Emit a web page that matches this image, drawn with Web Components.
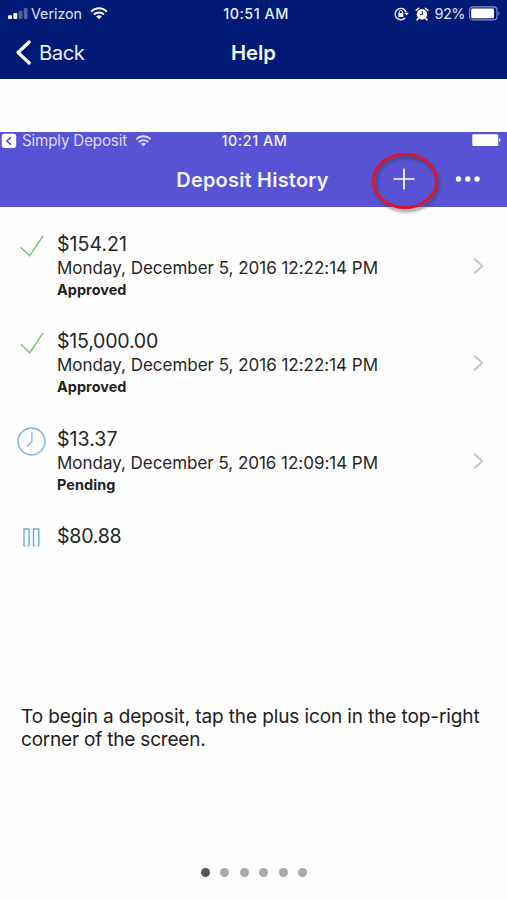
<!DOCTYPE html>
<html lang="en"><head><meta charset="utf-8"><title>Help</title>
<style>
html,body{margin:0;background:#fefefe}
body{font-family:Inter,"Liberation Sans",sans-serif}
</style></head><body>
<help-page></help-page>
<script>
const define=(name,html,setup)=>customElements.define(name,class extends HTMLElement{
  constructor(){super();this.attachShadow({mode:'open'});}
  connectedCallback(){this.shadowRoot.innerHTML=typeof html==='function'?html(this):html;if(setup)setup(this);}
});

/* A single line of text whose tracking is adjusted to a given width. */
define('fit-text','<style>:host{display:block;white-space:nowrap;flex:none}span{display:inline-block}</style><span><slot></slot></span>',el=>{
  el.style.fontSize=el.getAttribute('size')+'px';
  const w=+el.getAttribute('width'),s=el.shadowRoot.querySelector('span');
  el.style.width=w+'px';
  const n=el.textContent.length;
  s.style.letterSpacing=((w-s.getBoundingClientRect().width)/n)+'px';
});

const icons={
  signal:['22','12','<g fill="#fff"><rect x="0" y="7.3" width="4" height="3.7" rx="1"/><rect x="5.3" y="5" width="4" height="6" rx="1"/><g opacity=".32"><rect x="10.6" y="2.8" width="3.8" height="8.2" rx="1"/><rect x="15.8" y="0" width="3.8" height="11" rx="1"/></g></g>'],
  wifi:['18','13','<g fill="none" stroke="currentColor" stroke-width="2"><path d="M1.2 4.6C5.5.2 12.5.2 16.8 4.6"/><path d="M4 7.5C6.8 4.8 11.2 4.8 14 7.5"/></g><path fill="currentColor" d="M9 12.2 6.2 9.4Q9 7.1 11.8 9.4Z"/>'],
  back:['17','28','<path d="M14.2 3 3 13.5 14.2 24" fill="none" stroke="#fff" stroke-width="3.2" stroke-linecap="round" stroke-linejoin="round"/>'],
  lock:['16','14','<path d="M12.2 5.2A5.7 5.7 0 1 0 11.2 10.7" fill="none" stroke="#dfe4fa" stroke-width="1.4"/><path d="M10.3 5.7h4.5l-2.2 2.8z" fill="#fff"/><rect x="4.3" y="6" width="5" height="4" rx=".5" fill="#fff"/><path d="M5.2 6.2V5a1.6 1.6 0 0 1 3.2 0v1.2" fill="none" stroke="#fff"/>'],
  alarm:['14','14','<circle cx="7" cy="7.3" r="5.2" fill="#fff"/><path d="M1.2 3.3 3.6 1.2M12.8 3.3 10.4 1.2M3.2 11.5 2 13M10.8 11.5 12 13" stroke="#fff" stroke-width="1.5" stroke-linecap="round"/><path d="M7.3 4v3.6H4.8" fill="none" stroke="#001a75" stroke-width="1"/>'],
  battery:['32','15','<rect x=".6" y=".9" width="27.4" height="13" rx="3.2" fill="none" stroke="#8794ca" stroke-width="1.1"/><rect x="2.2" y="2.6" width="22.8" height="9.6" rx="1.2" fill="#fff"/><path d="M29.5 5.4q2.2 2 0 4z" fill="#8794ca"/>'],
  batteryFull:['30','13','<rect x=".3" y=".3" width="26" height="11.6" rx="1" fill="#fff"/><path d="M27.2 4q2.6 2 0 4z" fill="#fff"/>'],
  app:['16','16','<rect x=".8" y=".8" width="14.4" height="14.2" rx="2.4" fill="#fff"/><path d="M10 4.4 5.8 8 10 11.6" fill="none" stroke="#5250ca" stroke-width="1.5"/>'],
  plus:['22','22','<path d="M0.5 11h21M11 .5v21" stroke="#fff" stroke-width="1.7"/>'],
  more:['26','8','<g fill="#fff"><circle cx="3.5" cy="4" r="2.7"/><circle cx="12.8" cy="4" r="2.7"/><circle cx="22" cy="4" r="2.7"/></g>'],
  ring:['74','66','<defs><filter id="s" x="-20%" y="-20%" width="150%" height="150%"><feDropShadow dx="1.5" dy="3" stdDeviation="1.7" flood-color="#333" flood-opacity=".5"/></filter></defs><ellipse cx="35" cy="30" rx="31.6" ry="26.7" fill="none" stroke="#d8142c" stroke-width="3" filter="url(#s)"/>'],
  check:['24','23','<path d="M.8 12.3 9.7 20.8 23 1" fill="none" stroke="#78bf82" stroke-width="1.4"/>'],
  clock:['29','29','<circle cx="14.5" cy="14.5" r="13.4" fill="none" stroke="#82b8e3" stroke-width="1.6"/><path d="M14.9 5.6V14.8L10 19.7" fill="none" stroke="#82b8e3" stroke-width="1.3"/>'],
  pause:['17','21','<path d="M1 18V1H6V18M10.5 18V1H15.8V18M1 18h1.2M4.8 18H6M10.5 18h1.2M14.6 18h1.2" fill="none" stroke="#68acdf" stroke-width="1.4"/>'],
  next:['12','18','<path d="M1.3 1.8 9.2 9 1.3 16.2" fill="none" stroke="#c5c5c8" stroke-width="1.9"/>']
};
define('ui-icon',el=>{const[w,h,p]=icons[el.getAttribute('name')];
  return `<style>:host{display:block;flex:none}svg{display:block}</style><svg width="${w}" height="${h}" viewBox="0 0 ${w} ${h}">${p}</svg>`});

define('split-bar',`<style>:host{display:grid;grid-template-columns:minmax(0,1fr) auto minmax(0,1fr);align-items:center}
.l,.r{display:flex;align-items:center}.r{justify-content:flex-end}</style>
<div class="l"><slot name="left"></slot></div><slot></slot><div class="r"><slot name="right"></slot></div>`);

define('app-header',`<style>:host{display:block;height:78.5px;background:#001a75;color:#e9edff}
.status{height:27px;line-height:27px;padding:0 6px 0 8px}.status [slot]{color:#dce2fb}
.left,.right{display:flex;align-items:center}.sig{margin-right:1px}.wifi{margin-left:8px;color:#fff}
.nav{height:51px;line-height:51px;padding:0 15px}.help{font-weight:600;color:#f4f6ff}</style>
<split-bar class="status"><div class="left" slot="left"><ui-icon class="sig" name="signal"></ui-icon><fit-text size="14.3" width="51">Verizon</fit-text><ui-icon class="wifi" name="wifi"></ui-icon></div>
<fit-text size="14.4" width="65.5" style="font-weight:500;margin-left:3px">10:51 AM</fit-text>
<div class="right" slot="right"><ui-icon name="lock"></ui-icon><ui-icon name="alarm" style="margin:0 6px 0 5px"></ui-icon><fit-text size="14.5" width="30.5">92%</fit-text><ui-icon name="battery" style="margin:0 0 0 4px"></ui-icon></div></split-bar>
<split-bar class="nav"><div slot="left" class="left"><ui-icon name="back"></ui-icon><fit-text size="20.3" width="45.5" style="margin-left:7px">Back</fit-text></div><fit-text class="help" size="20.3" width="45">Help</fit-text></split-bar>`);

define('deposit-header',`<style>:host{display:block;height:75px;background:#5753d4;color:#f3f2ff}
.status{height:18px;line-height:18px;padding:0 5px 0 1px}.left,.right{display:flex;align-items:center}
.nav{height:60px;line-height:60px;padding-right:26px}.title{font-weight:600}
.nav .right{padding-bottom:3px}
.add{position:relative;display:block;margin-right:40px}.add ui-icon[name=ring]{position:absolute;left:-23px;top:-17px}</style>
<split-bar class="status"><div class="left" slot="left" style="color:#dcdbff"><ui-icon name="app"></ui-icon><fit-text size="15.2" width="105" style="margin-left:5px">Simply Deposit</fit-text><ui-icon name="wifi" style="margin-left:8px;zoom:.94"></ui-icon></div>
<fit-text size="14.4" width="66" style="font-weight:500;margin-left:6px">10:21 AM</fit-text><div class="right" slot="right" style="padding-bottom:2px"><ui-icon name="batteryFull"></ui-icon></div></split-bar>
<split-bar class="nav" style="padding-left:24px"><fit-text class="title" size="20" width="152.5">Deposit History</fit-text><div class="right" slot="right"><div class="add"><ui-icon name="plus"></ui-icon><ui-icon name="ring"></ui-icon></div><ui-icon name="more"></ui-icon></div></split-bar>`);

define('deposit-row',el=>{const a=n=>el.getAttribute(n);return `<style>:host{display:grid;grid-template-columns:57px 1fr 34px;height:97.5px;color:#262626}
.icon{display:flex;justify-content:center;align-items:center;width:63px;height:29px}
.amount{line-height:24px}.date{line-height:25px}.state{line-height:18px;font-weight:700;color:#222}.next{padding-top:25px}</style>
<div class="icon"><ui-icon name="${a('icon')}"></ui-icon></div>
<div><fit-text class="amount" size="19.6" width="${a('amount-width')}">${a('amount')}</fit-text>
${a('date')?`<fit-text class="date" size="17" width="321">${a('date')}</fit-text><fit-text class="state" size="14.4" width="${a('state-width')}">${a('state')}</fit-text>`:''}</div>
${a('date')?'<ui-icon class="next" name="next"></ui-icon>':''}`});

define('page-dots',`<style>:host{display:flex;gap:10.6px;justify-content:center}i{width:9px;height:9px;border-radius:50%;background:#aaa}i:first-of-type{background:#555}</style><i></i><i></i><i></i><i></i><i></i><i></i>`);

define('help-page',`<style>:host{display:flex;flex-direction:column;width:507px;height:900px;overflow:hidden;background:#fefefe}
deposit-header{margin-top:53.5px;position:relative;z-index:1}
.list{height:472px;padding-top:24.7px;box-sizing:border-box}
.copy{padding:25.5px 21px 0;line-height:23.5px;color:#202020;height:85px}
page-dots{margin-top:78.5px;padding-left:1px}</style>
<app-header></app-header><deposit-header></deposit-header>
<div class="list">
<deposit-row icon="check" amount="$154.21" amount-width="70" date="Monday, December 5, 2016 12:22:14 PM" state="Approved" state-width="69.5"></deposit-row>
<deposit-row icon="check" amount="$15,000.00" amount-width="101" date="Monday, December 5, 2016 12:22:14 PM" state="Approved" state-width="69.5"></deposit-row>
<deposit-row icon="clock" amount="$13.37" amount-width="60.5" date="Monday, December 5, 2016 12:09:14 PM" state="Pending" state-width="58.5"></deposit-row>
<deposit-row icon="pause" amount="$80.88" amount-width="64.5"></deposit-row>
</div>
<div class="copy"><fit-text size="19" width="458.5">To begin a deposit, tap the plus icon in the top-right</fit-text><fit-text size="19" width="184.5">corner of the screen.</fit-text></div>
<page-dots></page-dots>`);
</script></body></html>
